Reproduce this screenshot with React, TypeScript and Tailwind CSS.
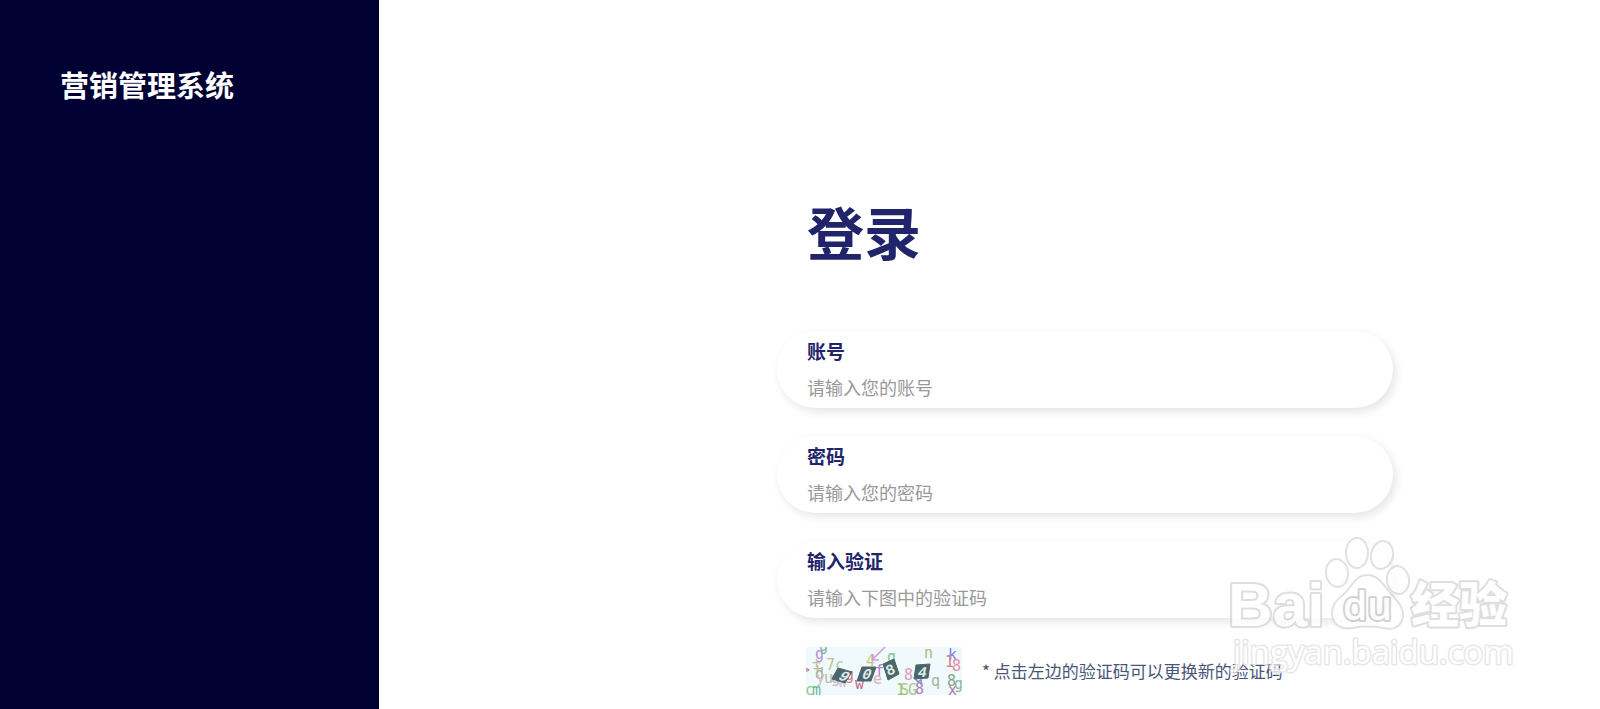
import React, { useState } from 'react';

const FONT = "font-['Noto_Sans_CJK_SC',sans-serif]";

const fields = [
  { id: 'account', type: 'text', label: '账号', placeholder: '请输入您的账号' },
  { id: 'password', type: 'password', label: '密码', placeholder: '请输入您的密码' },
  { id: 'captcha', type: 'text', label: '输入验证', placeholder: '请输入下图中的验证码' },
];

// Small background characters of the captcha: [char, x, y, color]
const noise: [string, number, number, string][] = [
  ['g', 13, 4, '#7dbb8f'],
  ['g', 9, 12, '#b58fe0'],
  ['+', 6, 21, '#c9c09a'],
  ['7', 20, 23, '#b9bda0'],
  ['c', 29, 23, '#b4c9a8'],
  ['+', 7, 27, '#bcb890'],
  ['d', 9, 32, '#a5ad9a'],
  ['y', 10, 36, '#cfc0c8'],
  ['u', 18, 36, '#b3baa8'],
  ['g', 25, 36, '#bfb2b8'],
  ['w', 32, 40, '#dfc0d2'],
  ['g', 39, 33, '#d67a9c'],
  ['w', 49, 42, '#cf5f86'],
  ['4', 60, 19, '#c6c28e'],
  ['f', 69, 29, '#b97cd4'],
  ['e', 67, 37, '#d9b4c6'],
  ['g', 81, 15, '#86c291'],
  ['8', 98, 33, '#e29abb'],
  ['n', 118, 11, '#b5b878'],
  ['k', 142, 13, '#7b80dc'],
  ['1', 139, 20, '#dc7a90'],
  ['8', 146, 24, '#e291a8'],
  ['q', 108, 35, '#8b82e6'],
  ['q', 125, 39, '#a4b49e'],
  ['8', 109, 47, '#a984b4'],
  ['1', 90, 48, '#98c27f'],
  ['S', 94, 48, '#a9c47f'],
  ['G', 102, 48, '#a9c59a'],
  ['8', 141, 39, '#8aa38a'],
  ['x', 142, 48, '#b67aa8'],
  ['g', 148, 42, '#8ab896'],
  ['c', -1, 48, '#8fc5a0'],
  ['m', 6, 48, '#6fb98a'],
  ['>', -5, 28, '#d9799c'],
];

function Captcha() {
  return (
    <svg viewBox="0 0 156 48" className="block h-12 w-[156px]" aria-hidden="true">
      <rect width="156" height="48" fill="#f0f9fc" />
      <g fontFamily="DejaVu Sans Mono, monospace" fontSize="15">
        {noise.map(([char, x, y, color], i) => (
          <text key={i} x={x} y={y} fill={color}>{char}</text>
        ))}
      </g>
      <path d="M79 0L66 13M67 7v6h6" fill="none" stroke="#cf9ad2" strokeWidth="1.5" />
      {/* Dark tiles carrying the code itself */}
      <g fill="#4c6668" stroke="#4c6668" strokeWidth="1" strokeLinejoin="round">
        <path d="M32 21l14 4-7 11-13-4z" />
        <path d="M56 20h14l-5 14H51z" />
        <path d="M77 17l11-5 5 15-11 6z" />
        <path d="M110 18l14-1-2 14-14 1z" />
      </g>
      <g fontFamily="Liberation Mono, monospace" fontSize="15" fontWeight="bold" fill="#dceaed">
        <text transform="translate(31 32) rotate(18) skewX(-20)">9</text>
        <text transform="translate(55 32) skewX(-18)">0</text>
        <text transform="translate(82 29) rotate(-22)">8</text>
        <text transform="translate(111 30) skewX(-12)">4</text>
      </g>
    </svg>
  );
}

const outline = {
  stroke: '#d6d6d6',
  strokeLinejoin: 'round',
  paintOrder: 'stroke',
} as const;

function Watermark() {
  return (
    <svg
      viewBox="0 0 300 150"
      className="pointer-events-none absolute right-[75px] bottom-[29px] h-[150px] w-[300px] opacity-80"
      aria-hidden="true"
    >
      <g fill="#fff" stroke="#dadada" strokeWidth="2">
        <ellipse cx="112" cy="43" rx="11" ry="14" transform="rotate(-8 112 43)" />
        <ellipse cx="132" cy="23" rx="11" ry="15" />
        <ellipse cx="157" cy="25" rx="11" ry="14" transform="rotate(12 157 25)" />
        <ellipse cx="173" cy="50" rx="11" ry="14" transform="rotate(-8 173 50)" />
        <path d="M142 45C155 45 159 57 168 66C176 74 179 80 178 87C176 98 167 100 158 98C147 96 137 96 127 98C116 100 108 95 107 84C107 74 112 70 118 65C127 57 130 45 142 45Z" />
      </g>
      <g fill="#fff" {...outline}>
        <text x="3" y="96" fontSize="62" fontWeight="700" fontFamily="Liberation Sans, sans-serif" strokeWidth="4">
          Bai
        </text>
        <text x="118" y="90" fontSize="39" fontWeight="600" fontFamily="Open Sans, sans-serif" strokeWidth="4" stroke="#c8c8c8">
          du
        </text>
        <text x="186" y="92" fontSize="48" fontWeight="900" fontFamily="Noto Sans CJK SC, sans-serif" strokeWidth="4">
          经验
        </text>
        <text x="8" y="134" fontSize="33" fontWeight="400" fontFamily="Open Sans, sans-serif" strokeWidth="3" stroke="#e2e2e2">
          jingyan.baidu.com
        </text>
      </g>
    </svg>
  );
}

export default function App() {
  const [values, setValues] = useState<Record<string, string>>({});

  return (
    <div className={`relative flex min-h-screen overflow-hidden bg-white ${FONT}`}>
      <aside className="w-[379px] shrink-0 bg-[#000033] px-[60px] pt-[62px]">
        <h1 className="text-[29px] leading-[44px] font-bold text-white">营销管理系统</h1>
      </aside>

      <main className="flex flex-1 justify-end pr-[207px]">
        <form className="w-full max-w-[616px] pt-[190px]" onSubmit={(e) => e.preventDefault()}>
          <h2 className="mb-[61px] pl-[30px] text-[57px] leading-[80px] font-bold text-[#21246b]">登录</h2>

          <div className="flex flex-col gap-7">
            {fields.map((field) => (
              <div
                key={field.id}
                className="flex h-[77px] flex-col rounded-full bg-white px-[30px] pt-[6px] shadow-[3px_4px_10px_rgba(0,0,0,0.10)]"
              >
                <label htmlFor={field.id} className="text-[19px] leading-7 font-bold text-[#21246b]">
                  {field.label}
                </label>
                <input
                  id={field.id}
                  type={field.type}
                  value={values[field.id] || ''}
                  onChange={(e) => setValues({ ...values, [field.id]: e.target.value })}
                  placeholder={field.placeholder}
                  className="mt-2 h-7 w-full bg-transparent text-[18px] leading-7 text-[#21246b] outline-none placeholder:text-[#999999]"
                />
              </div>
            ))}
          </div>

          <div className="mt-[29px] flex items-center gap-5 pl-[29px]">
            <button type="button" aria-label="更换验证码" className="shrink-0 cursor-pointer">
              <Captcha />
            </button>
            <p className="text-[17px] leading-6 whitespace-nowrap text-[#4a5578]">* 点击左边的验证码可以更换新的验证码</p>
          </div>
        </form>
      </main>

      <Watermark />
    </div>
  );
}
